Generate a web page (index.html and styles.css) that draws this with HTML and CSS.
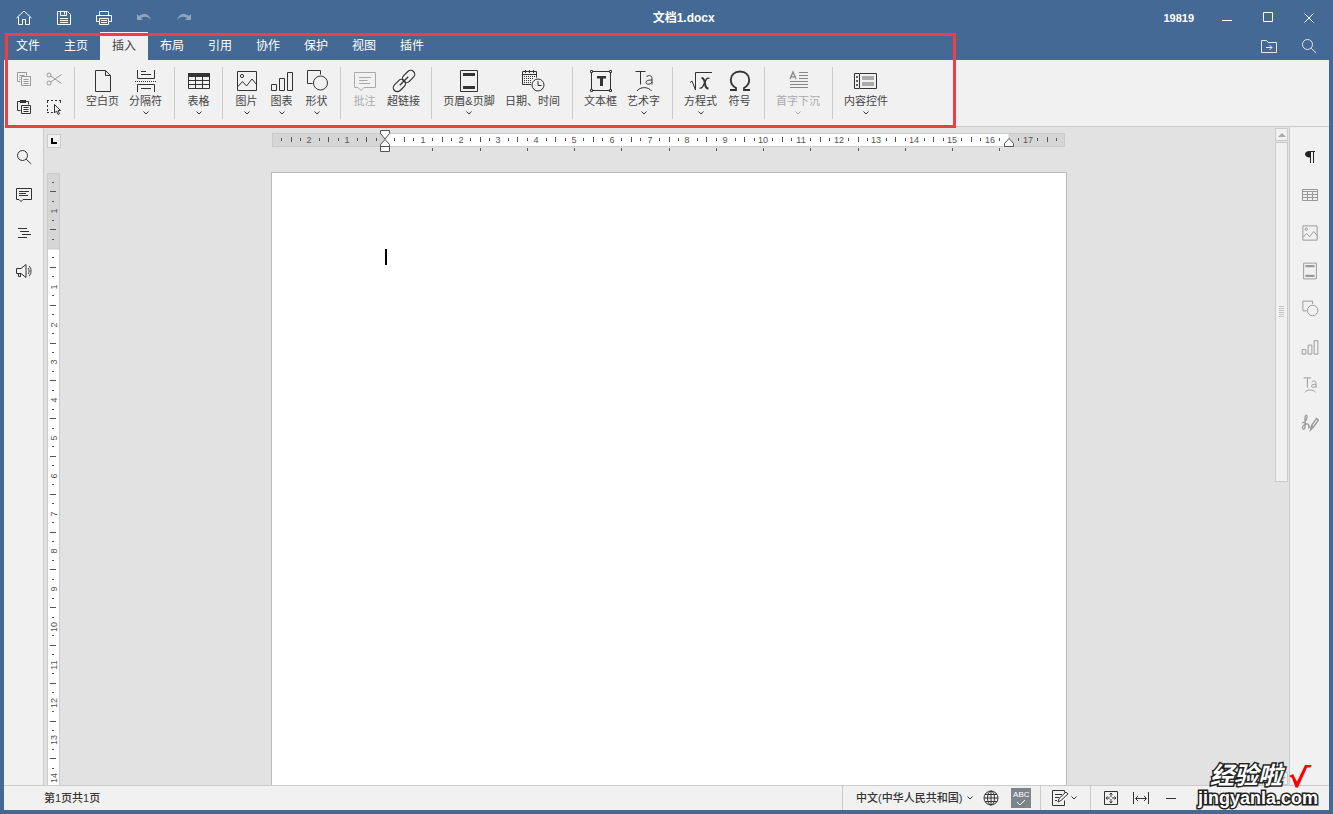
FILE: index.html
```html
<!DOCTYPE html>
<html lang="zh-CN">
<head>
<meta charset="utf-8">
<title>文档1.docx</title>
<link rel="stylesheet" href="styles.css">
</head>
<body>
<svg class="defs" aria-hidden="true">
  <symbol id="i-table" viewBox="0 0 24 24"><path fill="currentColor" stroke="none" d="M1 4h22v4H1z"/><path d="M1.500 4.500h21v15h-21zM1.500 11.500h21M1.500 15.500h21M8.500 8v11.500M15.500 8v11.500"/></symbol>
  <symbol id="i-table-thin" viewBox="0 0 18 18"><path d="M1.500 3.500h15v11h-15zM1.500 5.500h15M1.500 8.500h15M1.500 11.500h15M6.500 5v9.500M11.500 5v9.500"/></symbol>
  <symbol id="i-image" viewBox="0 0 24 24"><path d="M2.500 2.500h19v19h-19zM3 17.500l4.500-5 4 4.500 5.500-7 5 6"/><circle cx="7" cy="7" r="1.600"/></symbol>
  <symbol id="i-chart" viewBox="0 0 24 24"><path d="M1.500 15.500h5v6h-5zM9.500 9.500h5v12h-5zM17.500 3.500h5v18h-5z"/></symbol>
  <symbol id="i-shape" viewBox="0 0 24 24"><path d="M7.500 14.500h-5v-13h13v4"/><circle cx="15.500" cy="14" r="7"/></symbol>
  <symbol id="i-header" viewBox="0 0 24 24"><path d="M3.500 1.500h17v21h-17z"/><path fill="currentColor" stroke="none" d="M6 4h12v3H6zM6 17h12v3H6z"/></symbol>
  <symbol id="i-art" viewBox="0 0 24 24"><path d="M3.500 2.500h10M8.500 2.500v13M14.500 8c1-2.200 5.500-2 5.500 1.500v6M20 11c-3 0-6 .3-6 2.500s4.500 2.500 6-.5M5 22c3-4.500 11.500-4.500 14.500 0"/></symbol>
  <symbol id="i-comment" viewBox="0 0 24 24"><path d="M1.500 3.500h21v15H11l-3 3-3-3H1.500zM6 8.500h12M6 11.500h8.500M6 14.500h11"/></symbol>
  <symbol id="i-comment-small" viewBox="0 0 18 18"><path d="M1.500 2.500h15v11H8l-2 2-2-2H1.500zM4 5.500h10M4 7.500h7M4 9.500h9"/></symbol>
  <symbol id="i-search" viewBox="0 0 16 16"><circle cx="6.500" cy="6.500" r="5"/><path d="M10.200 10.200l5 4.800"/></symbol>
  <symbol id="i-chevron" viewBox="0 0 8 6"><path d="M1.500 1.500L4 4l2.500-2.500"/></symbol>
</svg>

<header class="title-bar">
  <div class="quick">
    <button aria-label="主页面"><svg class="ic16" viewBox="0 0 16 16"><path d="M.5 8L8 1l7.500 7M2.500 7v7.500h4V9.500h3v5h4V7"/></svg></button>
    <button aria-label="保存"><svg class="ic16" viewBox="0 0 16 16"><path d="M1.500 1.500h10l3 3v10h-13zM4.500 1.500v4h6v-4M8.500 2v2.500M4 8.500h8M4 10.500h8M4 12.500h8"/></svg></button>
    <button aria-label="打印"><svg class="ic16" viewBox="0 0 16 16"><path d="M3.500 5.500v-4h9v4M3.500 11.500h-3v-6h15v6h-3M3.500 8.500h9v6h-9zM5 10.500h6M5 12.500h6"/></svg></button>
    <button class="dim" aria-label="撤销"><svg class="ic16" viewBox="0 0 16 16"><path class="solid" d="M1 4l2 2c4-3.500 10-3 12 4-3-4-7-4-10-2l2 2H1z"/></svg></button>
    <button class="dim" aria-label="重做"><svg class="ic16" viewBox="0 0 16 16"><path class="solid" d="M15 4l-2 2C9 2.500 3 3 1 10c3-4 7-4 10-2l-2 2h6z"/></svg></button>
  </div>
  <h1>文档1.docx</h1>
  <span class="user">19819</span>
  <div class="window-buttons">
    <button aria-label="最小化"><svg class="ic16" viewBox="0 0 16 16"><path d="M3 10.500h10"/></svg></button>
    <button aria-label="最大化"><svg class="ic16" viewBox="0 0 16 16"><path d="M3.500 2.500h9v9h-9z"/></svg></button>
    <button aria-label="关闭"><svg class="ic16" viewBox="0 0 16 16"><path d="M3.500 3.500l9 9M12.500 3.500l-9 9"/></svg></button>
  </div>
</header>

<nav class="tabs">
  <button>文件</button><button>主页</button><button class="active">插入</button><button>布局</button><button>引用</button><button>协作</button><button>保护</button><button>视图</button><button>插件</button>
  <div class="tab-tools">
    <button aria-label="打开位置"><svg class="ic18" viewBox="0 0 18 18"><path d="M1.500 15.500v-12h5l1.500 2h8.500v10zM6 10.500h6M9.500 8l2.500 2.500L9.500 13"/></svg></button>
    <button aria-label="搜索"><svg class="ic16"><use href="#i-search"/></svg></button>
  </div>
</nav>

<section class="toolbar">
  <div class="clipboard">
    <button class="copy" aria-label="复制"><svg class="ic16" viewBox="0 0 16 16"><path d="M4.500 10.500h-3v-9h9v3M3.500 4.500h5M3.500 6.500h1M3.500 8.500h1M5.500 5.500h9v9h-9zM7.500 8.500h5M7.500 10.500h5M7.500 12.500h5"/></svg></button>
    <button class="copy" aria-label="剪切"><svg class="ic16" viewBox="0 0 16 16"><circle cx="3" cy="4" r="2"/><circle cx="3" cy="12" r="2"/><path d="M4.800 5L15.500 12.500M4.800 11L15.500 3.500"/></svg></button>
    <button aria-label="粘贴"><svg class="ic16" viewBox="0 0 16 16"><path d="M4.500 11.500h-3v-9h11v3M5.500 6.500h9v8h-9zM7.500 8.500h5M7.500 10.500h5M7.500 12.500h5"/><path class="solid" d="M4 1h6v3H4z"/></svg></button>
    <button aria-label="全选"><svg class="ic16" viewBox="0 0 16 16"><path stroke-dasharray="2 2" d="M1 1.500h14M1.500 2v12M14.500 2v4M1 13.500h6"/><path d="M8.500 5.500v8.500l2-2 1.500 3.500 1.500-.7-1.500-3.300h2.500z"/></svg></button>
  </div>

  <div class="group">
    <button class="tool"><svg class="ic24" viewBox="0 0 24 24"><path d="M4.500 1.500h10l5 5v16h-15zM14.500 1.500v5h5"/></svg><span>空白页</span></button>
    <button class="tool"><svg class="ic24" viewBox="0 0 24 24"><path d="M3.500 1v8.500h17V1M7 2.500h5M7 5.500h10M3.500 23v-7.500h17V23M7 19.500h10"/><path stroke-dasharray="1 1" d="M1 12.500h22"/></svg><span>分隔符</span><svg class="chev"><use href="#i-chevron"/></svg></button>
  </div>
  <div class="group tight">
    <button class="tool"><svg class="ic24"><use href="#i-table"/></svg><span>表格</span><svg class="chev"><use href="#i-chevron"/></svg></button>
  </div>
  <div class="group tight">
    <button class="tool"><svg class="ic24"><use href="#i-image"/></svg><span>图片</span><svg class="chev"><use href="#i-chevron"/></svg></button>
    <button class="tool"><svg class="ic24"><use href="#i-chart"/></svg><span>图表</span><svg class="chev"><use href="#i-chevron"/></svg></button>
    <button class="tool"><svg class="ic24"><use href="#i-shape"/></svg><span>形状</span><svg class="chev"><use href="#i-chevron"/></svg></button>
  </div>
  <div class="group tight">
    <button class="tool off"><svg class="ic24"><use href="#i-comment"/></svg><span>批注</span></button>
    <button class="tool"><svg class="ic24" viewBox="0 0 24 24"><g stroke-width="1.200" transform="rotate(-45 12 12)"><rect x="-1.500" y="8" width="14" height="8" rx="4"/><rect x="11.500" y="8" width="14" height="8" rx="4"/><path d="M6 12h12"/></g></svg><span>超链接</span></button>
  </div>
  <div class="group">
    <button class="tool wide"><svg class="ic24"><use href="#i-header"/></svg><span>页眉&amp;页脚</span><svg class="chev"><use href="#i-chevron"/></svg></button>
    <button class="tool"><svg class="ic24" viewBox="0 0 24 24"><path d="M10 15.500H1.500v-13h14v6M1.500 5.500h14M4.500 1v3M8.500 1v3M12.500 1v3"/><path stroke-dasharray="1 1" d="M3 7.500h11M3 9.500h9M3 11.500h7M3 13.500h7"/><circle cx="17" cy="16" r="6"/><path d="M17 12v4.500h3.500"/></svg><span>日期、时间</span></button>
  </div>
  <div class="group">
    <button class="tool"><svg class="ic24" viewBox="0 0 24 24"><path d="M2.500 2.500h19v19h-19z"/><path class="paper" d="M1.500 1.500h2v2h-2zM20.500 1.500h2v2h-2zM1.500 20.500h2v2h-2zM20.500 20.500h2v2h-2z"/><path class="solid" d="M8 7h9v2.500h-3V17h-3V9.500H8z"/></svg><span>文本框</span></button>
    <button class="tool"><svg class="ic24"><use href="#i-art"/></svg><span>艺术字</span><svg class="chev"><use href="#i-chevron"/></svg></button>
  </div>
  <div class="group">
    <button class="tool"><svg class="ic24" viewBox="0 0 24 24"><path d="M1 13.500l2-1.500 3.500 9V3.500H23"/><path stroke-width="2" d="M12.500 9c3 0 3 3 3.500 6s1 4.500 3.500 4.500"/><path stroke-width="1.300" d="M20.500 9.500c-2.500-1.500-4 2-5 4.500s-2.500 6-5 5"/></svg><span>方程式</span><svg class="chev"><use href="#i-chevron"/></svg></button>
    <button class="tool"><svg class="ic24" viewBox="0 0 24 24"><path stroke-width="1.800" d="M2 21h6v-2C4.500 17 2.800 14.500 2.800 11 2.800 6 6.500 2.500 12 2.500S21.200 6 21.200 11c0 3.500-1.700 6-5.200 8v2h6"/></svg><span>符号</span></button>
  </div>
  <div class="group">
    <button class="tool off"><svg class="ic24 dark" viewBox="0 0 24 24"><path d="M13 3.500h9M13 6.500h9M13 9.500h9M4 12.500h18M4 15.500h18M4 18.500h18"/><path stroke-width="1.300" d="M4 10l3-7 3 7M5 7.800h4"/></svg><span>首字下沉</span><svg class="chev"><use href="#i-chevron"/></svg></button>
  </div>
  <div class="group">
    <button class="tool"><svg class="ic24" viewBox="0 0 24 24"><path d="M5.500 4.500h17v15h-17zM5 4.500H.5v15H5"/><path stroke-width="1.500" stroke-dasharray="2 2" d="M3 7v11"/><path class="bar" d="M8 7h12v4H8zM8 13h12v4H8z"/></svg><span>内容控件</span><svg class="chev"><use href="#i-chevron"/></svg></button>
  </div>
</section>

<main class="workspace">
  <aside class="panel left">
    <button aria-label="查找"><svg class="ic16"><use href="#i-search"/></svg></button>
    <button aria-label="批注"><svg class="ic18"><use href="#i-comment-small"/></svg></button>
    <button aria-label="导航"><svg class="ic16" viewBox="0 0 16 16"><path d="M2 3.500h9M4 6.500h9M6 9.500h9M2 12.500h9"/></svg></button>
    <button aria-label="反馈"><svg class="ic16" viewBox="0 0 16 16"><path d="M.5 5.500H5l5-4v13l-5-4H.5zM2.500 10.500v3h2v-3M12 5c1.500 1.500 1.500 4.500 0 6M13 3c2.700 2 2.700 8 0 10"/></svg></button>
  </aside>
  <div class="editor">
    <button class="corner" aria-label="制表符"><svg viewBox="0 0 8 8"><path d="M2 1v5h5"/></svg></button>
    <div class="ruler-row"><svg id="h-ruler" class="h-ruler"></svg></div>
    <div class="v-ruler-box"><svg id="v-ruler" class="v-ruler"></svg></div>
    <div class="sheet-area"><article class="sheet"><span class="caret"></span></article></div>
    <div class="scrollbar">
      <button aria-label="向上"><svg viewBox="0 0 8 6"><path d="M0 5l4-4 4 4z"/></svg></button>
      <div class="track"><div class="thumb"><i></i></div></div>
      <button aria-label="向下"><svg viewBox="0 0 8 6"><path d="M0 1l4 4 4-4z"/></svg></button>
    </div>
  </div>
  <aside class="panel right">
    <button class="on" aria-label="段落"><svg class="ic16" viewBox="0 0 16 16"><path class="solid" d="M13 2v1h-1v11h-1V3H9v11H8V8.500C1.500 8.500 1.500 2 7.500 2z"/></svg></button>
    <button aria-label="表格"><svg class="ic18 crisp"><use href="#i-table-thin"/></svg></button>
    <button aria-label="图片"><svg class="ic18"><use href="#i-image"/></svg></button>
    <button aria-label="页眉和页脚"><svg class="ic18"><use href="#i-header"/></svg></button>
    <button aria-label="形状"><svg class="ic18"><use href="#i-shape"/></svg></button>
    <button aria-label="图表"><svg class="ic18"><use href="#i-chart"/></svg></button>
    <button aria-label="艺术字"><svg class="ic18"><use href="#i-art"/></svg></button>
    <button aria-label="签名"><svg class="ic18" viewBox="0 0 18 18"><path d="M1 9c3-1 5-3 5-6s-2-2-2 1v9c0 3-2.500 3-2.500.5S6 9 7.500 10.500 6 15 9 13M9.500 16l1-4.500 5-7 2 1.500-5 7zM10.500 11.500l2 1.500"/></svg></button>
  </aside>
</main>

<footer class="status">
  <span class="pages">第1页共1页</span>
  <div class="cell lang">
    <button>中文(中华人民共和国)<svg class="chev"><use href="#i-chevron"/></svg></button>
    <button aria-label="语言"><svg class="ic16" viewBox="0 0 16 16"><circle cx="8" cy="8" r="7"/><ellipse cx="8" cy="8" rx="3.500" ry="7"/><path d="M8 1v14M1 8h14M2 4.500h12M2 11.500h12"/></svg></button>
    <button class="spell" aria-label="拼写检查"><span>ABC</span><svg viewBox="0 0 10 7"><path d="M1 3l3 3 5-5"/></svg></button>
  </div>
  <div class="cell review">
    <button aria-label="修订"><svg class="ic18" viewBox="0 0 18 18"><path d="M13.500 3.500v-2h-12v15h12v-5M4 5.500h7M4 8.500h4M4 11.500h2M7 13l1-3.500 7-6.500 2 2-7 6.500z"/></svg><svg class="chev"><use href="#i-chevron"/></svg></button>
  </div>
  <div class="cell zoom">
    <button aria-label="适合页面"><svg class="ic16" viewBox="0 0 16 16"><path d="M1.500 1.500h13v13h-13zM8 7V3M6.500 4.500L8 3l1.500 1.500M8 9v4M6.500 11.500L8 13l1.500-1.500M7 8H3M4.500 6.500L3 8l1.500 1.500M9 8h4M11.500 6.500L13 8l-1.500 1.500"/></svg></button>
    <button aria-label="适合宽度"><svg class="ic18" viewBox="0 0 18 18"><path d="M1.500 3v12M16.500 3v12M4 9.500h10M6 7L3.500 9.500 6 12M12 7l2.500 2.500L12 12"/></svg></button>
    <button aria-label="缩小"><svg class="ic16" viewBox="0 0 16 16"><path d="M3 8.500h10"/></svg></button>
  </div>
</footer>

<div class="highlight"></div>
<div class="mark">
  <div class="mark-top"><b>经验啦</b><svg viewBox="0 0 24 24"><path d="M1 12l4-2 4 7.500L17 1h6.500l-1 2.500H19L10 23.500H7.500L4 14z"/></svg></div>
  <div class="mark-url">jingyanla.com</div>
</div>
<script src="rulers.js"></script>
</body>
</html>
```

FILE: styles.css
```css
* { box-sizing: border-box; }

body {
  --line: #cbcbcb;
  --bg: #f1f1f1;
  --ink: #444;
  margin: 0;
  height: 100vh;
  padding: 0 4px 4px;
  display: flex;
  flex-direction: column;
  position: relative;
  overflow: hidden;
  background: #446995;
  color: var(--ink);
  font: 11px/16px "Liberation Sans", "Noto Sans CJK SC", sans-serif;
}

button {
  margin: 0;
  padding: 0;
  border: 0;
  background: none;
  color: inherit;
  font: inherit;
  display: flex;
  align-items: center;
  justify-content: center;
}

svg { fill: none; stroke: currentColor; stroke-width: 1; flex: none; display: block; }
.defs { position: absolute; width: 0; height: 0; }
.solid { fill: currentColor; stroke: none; }
.paper { fill: var(--bg); }
.bar { fill: #aaa; stroke: none; }
.ic16 { width: 16px; height: 16px; }
.ic18 { width: 18px; height: 18px; }
.ic24 { width: 24px; height: 24px; }
.chev { width: 8px; height: 6px; }

/* Title bar */
.title-bar { height: 32px; padding-top: 3px; display: flex; align-items: center; color: #fff; flex: none; }
.quick, .window-buttons { display: flex; height: 100%; }
.quick button { width: 40px; }
.quick .dim { opacity: .4; }
.title-bar h1 { flex: 1; margin: 0; text-align: center; font-size: 12px; line-height: 16px; font-weight: 700; }
.user { font-weight: 700; margin-right: 12px; }
.window-buttons button { width: 41px; }

/* Tabs */
.tabs { height: 28px; display: flex; flex: none; color: #fff; font-size: 12px; }
.tabs > button { width: 48px; }
.tabs .active { background: var(--bg); color: var(--ink); }
.tab-tools { margin-left: auto; display: flex; opacity: .85; }
.tab-tools button { width: 40px; }

/* Toolbar */
.toolbar { height: 67px; flex: none; display: flex; align-items: flex-start; padding-top: 7px; background: var(--bg); border-bottom: 1px solid var(--line); color: #333; }
.clipboard { width: 70px; padding: 0 5px; display: grid; grid-template-columns: 30px 30px; grid-auto-rows: 28px; }
.clipboard button { margin-top: -4px; }
.clipboard .copy { color: #999; }
.group { height: 52px; display: flex; padding: 0 7px 0 6px; border-left: 1px solid var(--line); }
.tight { padding: 0 6px; }
.tool { padding: 2px 5px 0; min-width: 35px; flex-direction: column; justify-content: flex-start; white-space: nowrap; }
.wide { min-width: 62px; }
.tool span { color: var(--ink); }
.tool .chev { margin-top: 1px; }
.off, .tool.off span { color: #aaa; }
.off .dark { color: #888; }

/* Workspace */
.workspace { flex: 1; min-height: 0; display: flex; background: #e2e2e2; }
.panel { width: 40px; background: var(--bg); padding-top: 11px; color: #333; }
.panel button { width: 40px; height: 38px; }
.left { border-right: 1px solid var(--line); }
.right { border-left: 1px solid var(--line); color: #999; }
.right .on { color: #222; }
.right .ic18 { stroke-width: 1.3; }
.right .crisp { stroke-width: 1; }

.editor { flex: 1; min-width: 0; display: grid; grid-template-columns: 19px minmax(0, 1fr) 14px; grid-template-rows: 45px minmax(0, 1fr); }
.corner { width: 14px; height: 14px; margin: 7px 0 0 3px; border: 1px solid var(--line); background: var(--bg); color: #000; }
.corner svg { width: 8px; height: 8px; stroke-width: 2; }
.ruler-row { display: flex; justify-content: center; padding-top: 2px; overflow: hidden; }
.h-ruler { width: 796px; height: 26px; }
.v-ruler-box { grid-row: 2; padding: 1px 0 0 3px; min-height: 0; }
.v-ruler { width: 14px; height: 100%; }
.sheet-area { display: flex; justify-content: center; min-height: 0; }
.sheet { width: 796px; flex: none; padding: 76px 113px 0; background: #fff; border: 1px solid #bbb; border-bottom: 0; }
.caret { display: block; width: 2px; height: 16px; background: #000; }

.ruler-edge { fill: #d6d6d6; stroke: #cbcbcb; }
.ruler-body { fill: #fff; stroke: #cbcbcb; }
.tick { stroke: #555; }
.num { fill: #555; stroke: none; font-size: 9px; text-anchor: middle; }
.indent { fill: #fff; stroke: #555; }

.scrollbar { grid-column: 3; grid-row: 1 / 3; display: flex; flex-direction: column; padding-top: 1px; padding-right: 1px; }
.scrollbar button { height: 13px; flex: none; border: 1px solid var(--line); background: var(--bg); }
.scrollbar button svg { width: 8px; height: 6px; fill: #aaa; stroke: none; }
.track { flex: 1; padding-top: 1px; }
.thumb { height: 54%; border: 1px solid var(--line); background: var(--bg); display: flex; align-items: center; justify-content: center; }
.thumb i { width: 5px; height: 12px; background: repeating-linear-gradient(#c4c4c4 0 1px, transparent 1px 2px); }

/* Status bar */
.status { height: 25px; flex: none; display: flex; align-items: center; background: var(--bg); border-top: 1px solid var(--line); color: #333; }
.pages { flex: 1; padding-left: 40px; font-weight: 500; }
.cell { display: flex; align-items: center; height: 24px; border-left: 1px solid var(--line); }
.lang { width: 198px; padding-left: 13px; gap: 9px; }
.lang button:first-child { gap: 4px; white-space: nowrap; font-weight: 500; }
.lang .spell { width: 20px; height: 20px; flex-direction: column; background: #7d858c; color: #fff; margin-left: 3px; }
.spell span { font-size: 8px; line-height: 8px; }
.spell svg { width: 10px; height: 7px; }
.review { width: 50px; padding-left: 10px; }
.review button { gap: 1px; }
.zoom { width: 239px; padding-left: 12px; gap: 13px; }

/* Overlays */
.highlight { position: absolute; left: 5px; top: 33px; width: 951px; height: 95px; border: 3px solid #ee3f43; }
.mark { position: absolute; right: 15px; bottom: 6px; display: flex; flex-direction: column; align-items: flex-end; color: #fff; }
.mark b, .mark-url { -webkit-text-stroke: 3px #222; paint-order: stroke fill; font-weight: 700; }
.mark-top { display: flex; align-items: center; gap: 6px; padding-right: 6px; }
.mark b { font-size: 24px; line-height: 24px; font-style: italic; }
.mark-top svg { width: 24px; height: 24px; fill: #f00; stroke: none; }
.mark-url { font-size: 18px; line-height: 20px; }
```

FILE: rulers.js
```javascript
const CM = 37.8;
const NS = "http://www.w3.org/2000/svg";

function add(parent, name, attrs, text) {
  const el = document.createElementNS(NS, name);
  for (const key in attrs) el.setAttribute(key, attrs[key]);
  if (text !== undefined) el.textContent = text;
  parent.appendChild(el);
}

function drawHorizontal(svg) {
  const zero = 114;
  const end = Math.round(zero + 16.5 * CM);
  add(svg, "rect", { class: "ruler-edge", x: 1.5, y: 4.5, width: 792, height: 13 });
  add(svg, "rect", { class: "ruler-body", x: zero, y: 4.5, width: end - zero, height: 13 });
  for (let q = -11; q <= 71; q++) {
    if (q === 0 || q === 66) continue;
    const x = Math.round(zero + q * CM / 4);
    if (q % 4 === 0) {
      add(svg, "text", { class: "num", x: x, y: 14 }, Math.abs(q / 4));
    } else {
      const half = q % 2 === 0 ? 3 : 2;
      add(svg, "path", { class: "tick", d: `M${x + 0.5} ${11 - half}V${10 + half}` });
    }
  }
  for (let t = 1; t <= 13; t++) {
    const x = Math.round(zero + t * 1.25 * CM);
    add(svg, "path", { class: "tick", d: `M${x + 0.5} 19V22` });
  }
  add(svg, "path", { class: "indent", d: "M109.500 1.500h9v3l-4.500 5.500-4.500-5.500zM109.500 22.500h9v-7l-4.500-5-4.500 5zM109.500 17.500h9" });
  add(svg, "path", { class: "indent", d: `M${end - 4.5} 17.500h9v-3l-4.500-5-4.500 5z` });
}

function drawVertical(svg) {
  const zero = 76;
  const height = svg.getBoundingClientRect().height;
  svg.replaceChildren();
  add(svg, "rect", { class: "ruler-edge", x: 0.5, y: 0.5, width: 12, height: zero });
  add(svg, "rect", { class: "ruler-body", x: 0.5, y: zero, width: 12, height: height });
  for (let q = -7; q <= 100; q++) {
    const y = Math.round(zero + q * CM / 4);
    if (q === 0) continue;
    if (y > height - 6) break;
    if (q % 4 === 0) {
      add(svg, "text", { class: "num", transform: `translate(10 ${y}) rotate(-90)` }, Math.abs(q / 4));
    } else {
      const half = q % 2 === 0 ? 3 : 1;
      add(svg, "path", { class: "tick", d: `M${6 - half} ${y - 0.5}H${6 + half}` });
    }
  }
}

const vertical = document.getElementById("v-ruler");
drawHorizontal(document.getElementById("h-ruler"));
drawVertical(vertical);
window.addEventListener("resize", () => drawVertical(vertical));
```
